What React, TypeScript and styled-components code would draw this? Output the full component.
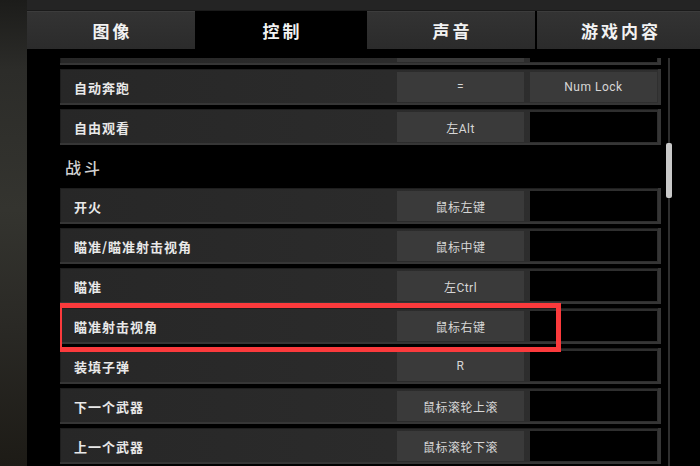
import styled, { createGlobalStyle } from "styled-components";

const GlobalStyle = createGlobalStyle`
  html, body {
    margin: 0;
    padding: 0;
    background: #000;
  }
  body {
    font-family: Roboto, "Noto Sans CJK SC", sans-serif;
  }
`;

const Screen = styled.div`
  display: flex;
  width: 700px;
  height: 466px;
  overflow: hidden;
  background: #000;
`;

const Backdrop = styled.div`
  width: 27px;
  flex-shrink: 0;
  background: linear-gradient(
    180deg,
    #1c1c1a 0%,
    #2c2c29 15%,
    #34342f 45%,
    #2a2925 70%,
    #1d1b16 100%
  );
`;

const Main = styled.div`
  flex: 1;
  display: flex;
  flex-direction: column;
  min-width: 0;
`;

const TopStrip = styled.div`
  height: 11px;
  background: #242424;
  border-bottom: 1px solid #1a1a1a;
  box-sizing: border-box;
`;

const TabBar = styled.div`
  display: flex;
  height: 38px;
  background: #000;
`;

const Tab = styled.div<{ $width: number; $active?: boolean; $gap?: number }>`
  width: ${(p) => p.$width}px;
  flex-shrink: 0;
  margin-left: ${(p) => p.$gap ?? 0}px;
  display: flex;
  align-items: center;
  justify-content: center;
  box-sizing: border-box;
  background: ${(p) =>
    p.$active ? "#000" : "linear-gradient(180deg, #333 0%, #2b2b2b 100%)"};
  border-top: 1px solid ${(p) => (p.$active ? "#000" : "#3c3c3c")};
  color: #f2f2f2;
  font-family: "Noto Sans CJK SC", sans-serif;
  font-size: 17px;
  font-weight: 700;
  letter-spacing: 3px;
  padding-left: 3px;
`;

const Panel = styled.div`
  flex: 1;
  display: flex;
  padding: 9px 28px 0 33px;
  min-height: 0;
`;

const Viewport = styled.div`
  flex: 1;
  overflow: hidden;
`;

/* list is scrolled a little: the row above "自动奔跑" only shows its bottom edge */
const List = styled.div`
  display: flex;
  flex-direction: column;
  gap: 4px;
  margin-top: -29px;
`;

const Row = styled.div<{ $marked?: boolean }>`
  position: relative;
  z-index: ${(p) => (p.$marked ? 2 : 1)};
  height: 36px;
  flex-shrink: 0;
  display: flex;
  align-items: center;
  gap: 6px;
  box-sizing: border-box;
  padding: 3px 4px 3px 14px;
  background: linear-gradient(90deg, #272727 0%, #2b2b2b 55%, #2f2f2f 100%);
  box-shadow: inset -3px -2px 0 #363636, inset 1px 1px 0 #1e1e1e;

  ${(p) =>
    p.$marked &&
    `
    &::after {
      content: "";
      position: absolute;
      left: -3px;
      top: -5px;
      width: 504px;
      height: 49px;
      box-sizing: border-box;
      border: 5px solid #fb3a3c;
      pointer-events: none;
    }
  `}
`;

const Label = styled.div`
  flex: 1;
  color: #e8e8e8;
  font-family: "Noto Sans CJK SC", sans-serif;
  font-size: 13px;
  font-weight: 700;
  letter-spacing: 1px;
  white-space: nowrap;
`;

const KeyCell = styled.div<{ $empty?: boolean }>`
  width: 127px;
  height: 30px;
  flex-shrink: 0;
  display: flex;
  align-items: center;
  justify-content: center;
  background: ${(p) => (p.$empty ? "#000" : "#3a3a3a")};
  color: #d6d6d6;
  font-family: Roboto, "Noto Sans CJK SC", sans-serif;
  font-size: 12px;
  letter-spacing: 0.5px;
`;

const Heading = styled.div`
  height: 35px;
  flex-shrink: 0;
  display: flex;
  align-items: center;
  padding-left: 5px;
  color: #d2d2d2;
  font-family: "Noto Sans CJK SC", sans-serif;
  font-size: 16px;
  font-weight: 500;
  letter-spacing: 3px;
`;

const ScrollTrack = styled.div`
  width: 6px;
  margin-left: 5px;
  padding-top: 85px;
  background: linear-gradient(90deg, transparent 2px, #2e2e2e 2px, #2e2e2e 4px, transparent 4px);
`;

const ScrollThumb = styled.div`
  height: 55px;
  border-radius: 2px;
  background: #c9c9c9;
`;

type Binding = {
  label: string;
  primary?: string;
  secondary?: string;
  bound?: boolean;
  marked?: boolean;
};

const generalRows: Binding[] = [
  { label: "", bound: true },
  { label: "自动奔跑", primary: "=", secondary: "Num Lock" },
  { label: "自由观看", primary: "左Alt" },
];

const combatRows: Binding[] = [
  { label: "开火", primary: "鼠标左键" },
  { label: "瞄准/瞄准射击视角", primary: "鼠标中键" },
  { label: "瞄准", primary: "左Ctrl" },
  { label: "瞄准射击视角", primary: "鼠标右键", marked: true },
  { label: "装填子弹", primary: "R" },
  { label: "下一个武器", primary: "鼠标滚轮上滚" },
  { label: "上一个武器", primary: "鼠标滚轮下滚" },
];

const tabs = [
  { name: "图像", width: 168 },
  { name: "控制", width: 172, active: true },
  { name: "声音", width: 168 },
  { name: "游戏内容", width: 165, gap: 2 },
];

const BindingRow = ({ row }: { row: Binding }) => (
  <Row $marked={row.marked}>
    <Label>{row.label}</Label>
    <KeyCell $empty={!row.primary && !row.bound}>{row.primary}</KeyCell>
    <KeyCell $empty={!row.secondary}>{row.secondary}</KeyCell>
  </Row>
);

const App = () => {
  return (
    <>
      <GlobalStyle />
      <Screen>
        <Backdrop />
        <Main>
          <TopStrip />
          <TabBar>
            {tabs.map((t) => (
              <Tab key={t.name} $width={t.width} $active={t.active} $gap={t.gap}>
                {t.name}
              </Tab>
            ))}
          </TabBar>
          <Panel>
            <Viewport>
              <List>
                {generalRows.map((r, i) => (
                  <BindingRow key={r.label || `row-${i}`} row={r} />
                ))}
                <Heading>战斗</Heading>
                {combatRows.map((r) => (
                  <BindingRow key={r.label} row={r} />
                ))}
              </List>
            </Viewport>
            <ScrollTrack>
              <ScrollThumb />
            </ScrollTrack>
          </Panel>
        </Main>
      </Screen>
    </>
  );
};

export default App;
